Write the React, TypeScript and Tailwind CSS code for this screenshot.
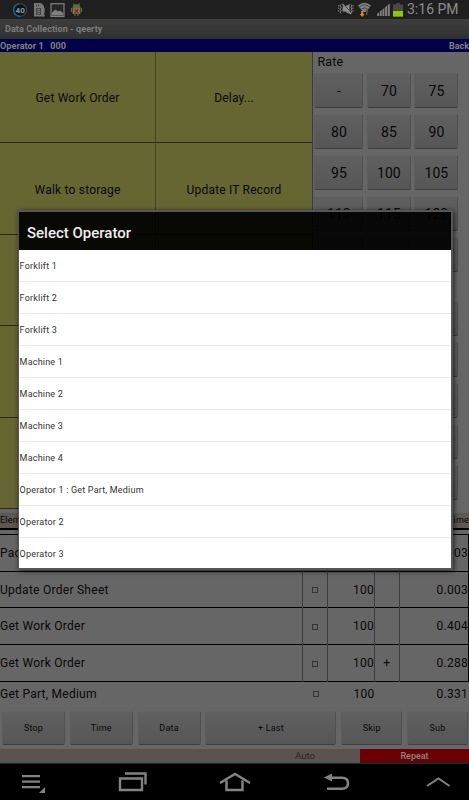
import clsx from "clsx";

const elements = [
  "Get Work Order",
  "Delay...",
  "Walk to storage",
  "Update IT Record",
  "",
  "",
  "",
  "",
  "",
  "",
];

const rates = ["-", "70", "75", "80", "85", "90", "95", "100", "105", "110", "115", "120", "", "", ""];

const operators = [
  "Forklift 1",
  "Forklift 2",
  "Forklift 3",
  "Machine 1",
  "Machine 2",
  "Machine 3",
  "Machine 4",
  "Operator 1 : Get Part, Medium",
  "Operator 2",
  "Operator 3",
];

const records = [
  { name: "Pac", rate: "", mark: "", time: "0.003" },
  { name: "Update Order Sheet", rate: "100", mark: "", time: "0.003" },
  { name: "Get Work Order", rate: "100", mark: "", time: "0.404" },
  { name: "Get Work Order", rate: "100", mark: "+", time: "0.288" },
];

const actions = ["Stop", "Time", "Data", "+ Last", "Skip", "Sub"];

const StatusBar = (): JSX.Element => (
  <div className="flex h-[19px] shrink-0 items-center bg-[#1f1f1f] pl-3">
    <svg width="72" height="19" viewBox="0 0 72 19">
      <circle cx="8" cy="10" r="6.4" fill="#101418" stroke="#34424a" strokeWidth="1.2" />
      <path d="M9 16.4A6.4 6.4 0 1 1 7 3.7" fill="none" stroke="#245b80" strokeWidth="1.4" />
      <text x="8.2" y="13" textAnchor="middle" fontSize="8" fontWeight="700" fill="#8a9aa2">40</text>
      <path d="M22 3h7l3 3v10.500H22z" fill="#777" />
      <path d="M24 8h5v7h-5zM24 4.500h1v2h-1zM26 4.500h1v2h-1z" fill="#444" />
      <path d="M25 9.500h3M25 11.500h3M25 13.500h3" stroke="#888" strokeWidth=".8" />
      <path d="M32 8v5M32 14.500v2" stroke="#777" strokeWidth="1.300" />
      <rect x="39" y="3.700" width="13" height="12.800" fill="#262626" stroke="#808080" strokeWidth="1.200" />
      <path d="M40 15.500v-3l3.500-3 2.500 2 2-1 3 2.500v2.500z" fill="#808080" />
      <path d="M60.500 8a4 3.800 0 0 1 8 0v6h-8z" fill="#5e6b3c" />
      <path d="M61.500 3.500l1 2M67.500 3.500l-1 2M59.500 8v4M69.500 8v4M63 14v2M66 14v2" stroke="#5e6b3c" strokeWidth="1.200" />
      <rect x="61" y="8" width="7" height="5.500" fill="#7c7751" />
      <path d="M62.800 9l3.500 4M66.300 9l-3.500 4" stroke="#9c1c1c" strokeWidth="1.200" />
    </svg>
    <svg className="ml-auto" width="68" height="19" viewBox="0 0 68 19">
      <path d="M4.500 6.500H7l4.500-2.500v10L7 11.500H4.500z" fill="#8c8c8c" />
      <g fill="none" stroke="#8c8c8c">
        <path d="M3 4.500l-1 1.500 1 1.500-1 1.500 1 1.500-1 1.500 1 1.500M13 4.500l1 1.500-1 1.500 1 1.500-1 1.500 1 1.500-1 1.500" />
        <path d="M.5 5v7.500M15 5v7.500" strokeWidth=".8" strokeDasharray="1.500 1" />
        <path d="M5.500 4l7.500 9" stroke="#1f1f1f" strokeWidth="1" />
        <path d="M4.500 4l8.500 10" strokeWidth="1.400" />
      </g>
      <path d="M20 5.500q6.500-5.500 13 0L28 12h-3z" fill="#808080" />
      <g fill="none" stroke="#3a3a3a" strokeWidth=".8">
        <path d="M21.500 6.700q5-3.500 10 0" />
        <path d="M23.200 9q3.300-2.300 6.600 0" />
      </g>
      <path d="M23.200 11h2v3h1.500l-2.500 3-2.500-3h1.500z" fill="#d98a24" />
      <path d="M28 15v-3.500h-1.200l2-2.200 2 2.200h-1.200V15z" fill="#555" />
      <path d="M39 16v-2.300l2-1.200V16zM41.700 16v-4.500l2-1.500v6zM44.400 16V9.500l2-1.500v8zM47.100 16V7l2-1.500V16zM49.800 16V5l2-1.500V16z" fill="#808080" />
      <path d="M58 3h4v1.500h3V17H55V4.500h3z" fill="#484848" />
      <rect x="55" y="11" width="10" height="5.500" fill="#8dc900" />
    </svg>
    <span className="w-[63px] pl-px text-[14px] leading-[19px] text-[#8c8c8c]">3:16 PM</span>
  </div>
);

const Key = ({ label, className }: { label: string; className?: string }): JSX.Element => (
  <div
    className={clsx(
      "flex items-center justify-center rounded-[2px] border border-t-[#646464] border-r-[#505050] border-b-[#3e3e3e] border-l-[#5d5d5d] bg-gradient-to-b from-[#606060] to-[#565656] text-[#080808]",
      className,
    )}
  >
    {label}
  </div>
);

const RatePanel = (): JSX.Element => (
  <div className="flex-1 border-l border-[#3a3a3a] pl-[1.400px]">
    <div className="h-[21px] pl-[3px] pt-[2px] text-[12.500px] leading-4 tracking-[0.2px]">Rate</div>
    <div className="grid grid-cols-[49px_44px_44px] gap-x-[3.500px] gap-y-[6px] text-[14px] leading-none">
      {rates.map((rate, i) => (
        <Key key={i} label={rate} className="h-[35px]" />
      ))}
    </div>
    <div className="mt-[29px] grid grid-cols-[49px_44px_44px] gap-x-[3.500px] gap-y-[6px]">
      {Array.from({ length: 15 }, (_, i) => (
        <Key key={i} label="" className="h-[35px]" />
      ))}
    </div>
  </div>
);

const Records = (): JSX.Element => (
  <div className="shrink-0">
    <div className="mt-[4px] flex h-[17px] items-center justify-between border-b-2 border-black bg-[#5f5752] text-[9px] tracking-[0.2px]">
      <span>Elem</span>
      <span>Time</span>
    </div>
    <div className="mt-[4px] border-t border-r border-black text-[12px] tracking-[0.27px]">
      {records.map((record, i) => (
        <div
          key={i}
          className="grid h-[36.700px] grid-cols-[302px_24.500px_47.500px_24.500px_1fr] border-b border-black leading-[37px]"
        >
          <span>{record.name}</span>
          <span className="flex items-center justify-center border-l border-[#3c3c3c]">
            <span className="size-[6px] border border-[#333]" />
          </span>
          <span className="border-l border-[#3c3c3c] text-right">{record.rate}</span>
          <span className="border-l border-[#3c3c3c] text-center">{record.mark}</span>
          <span className="border-l border-[#3c3c3c] text-right">{record.time}</span>
        </div>
      ))}
    </div>
    <div className="grid h-[29px] grid-cols-[302px_24.500px_48px_24.500px_1fr] pr-px text-[12px] leading-[25px] tracking-[0.25px]">
      <span>Get Part, Medium</span>
      <span className="flex h-6 items-center justify-center pl-[4px]">
        <span className="size-[6px] border border-[#333]" />
      </span>
      <span className="text-right">100</span>
      <span />
      <span className="text-right">0.331</span>
    </div>
  </div>
);

const NavBar = (): JSX.Element => (
  <div className="h-[37px] shrink-0 border-t border-[#063440] bg-black">
    <svg width="469" height="36" viewBox="0 764 469 36" fill="none" stroke="#828282" strokeWidth="2">
      <path d="M22 776.200h18M22 781.700h18M22 787.200h18" strokeWidth="2.200" />
      <path d="M45 787v6h-6z" fill="#828282" stroke="none" />
      <path d="M120 778.500h22v11.500h-22z" strokeWidth="2.400" />
      <path d="M125 773.500h20.500v11" strokeWidth="2.400" />
      <path d="M220 783l15-9 15 9" strokeWidth="2.500" />
      <path d="M226.500 780.500v9.500h16v-9.500" strokeWidth="2.500" />
      <path d="M330 777.700h12q6 0 6 5.500t-6 5.500h-15" strokeWidth="2.500" />
      <path d="M324 777.500l8-4v8z" fill="#828282" stroke="none" />
      <path d="M427 786l11.500-7.500 11 7.500" />
    </svg>
  </div>
);

const OperatorDialog = (): JSX.Element => (
  <div className="absolute left-[18px] top-[210px] flex h-[360px] w-[435px] flex-col border-2 border-l-[1.500px] border-[#565656] shadow-[1px_1px_5px_rgba(0,0,0,0.7)]">
    <h2 className="flex h-[38px] shrink-0 items-center bg-black/92 pl-[8px] pt-[4px] text-[15px] font-medium leading-none text-[#eee]">
      Select Operator
    </h2>
    <ul className="flex-1 overflow-hidden bg-white">
      {operators.map((operator) => (
        <li
          key={operator}
          className="h-8 border-b border-[#ebebeb] pl-[0.600px] pt-px text-[9px] leading-[31px] tracking-[0.2px] text-[#333]"
        >
          {operator}
        </li>
      ))}
    </ul>
  </div>
);

const App = (): JSX.Element => {
  return (
    <div className="relative flex h-[800px] w-[469px] flex-col overflow-hidden bg-[#666] font-['Roboto',sans-serif] text-[#080808]">
      <StatusBar />
      <div className="h-5 shrink-0 bg-gradient-to-b from-[#3e3e3e] to-[#303030] pl-[5px] text-[9px] font-bold leading-[20px] tracking-[0.08px] text-[#7d7d7d]">
        Data Collection - qeerty
      </div>
      <div className="flex h-[13px] shrink-0 justify-between bg-[#000048] text-[9px] font-bold leading-[14px] text-[#828282]">
        <span className="whitespace-pre tracking-[0.1px]">
          Operator 1<span className="ml-[6.500px]">000</span>
        </span>
        <span>Back</span>
      </div>
      <div className="flex h-[457px] shrink-0 overflow-hidden">
        <div className="grid w-[312px] grid-cols-[156px_156px] grid-rows-5 bg-[#666633] text-[12px] tracking-[0.2px]">
          {elements.map((element, i) => (
            <div
              key={i}
              className="flex items-center justify-center border-b border-[#292914] pt-[2px] odd:border-r odd:border-r-[#44441f]"
            >
              {element}
            </div>
          ))}
        </div>
        <RatePanel />
      </div>
      <Records />
      <div className="mt-[0.600px] grid h-[34px] shrink-0 grid-cols-[63px_63px_63px_131px_61px_61px] gap-x-[4.800px] pl-[2px] text-[9px] tracking-[0.2px]">
        {actions.map((action) => (
          <Key key={action} label={action} className="pt-px" />
        ))}
      </div>
      <div className="mt-auto flex h-[14px] shrink-0 bg-[#5b544e] text-[9.500px] leading-[14px]">
        <span className="ml-[250px] w-[110px] text-center text-[#252525]">Auto</span>
        <span className="flex-1 bg-[#6a0000] text-center text-[9px] font-medium text-[#8a8a8a]">Repeat</span>
      </div>
      <NavBar />
      <OperatorDialog />
    </div>
  );
};

export default App;
